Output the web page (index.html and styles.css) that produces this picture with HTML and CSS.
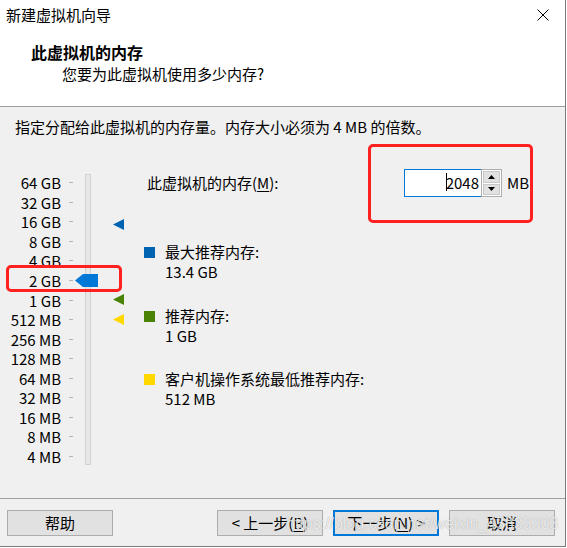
FILE: index.html
```html
<!DOCTYPE html>
<html lang="zh-CN">
<head>
<meta charset="utf-8">
<title>新建虚拟机向导</title>
<link rel="stylesheet" href="styles.css">
</head>
<body>
<div class="window">
  <div class="titlebar">
    <span class="title">新建虚拟机向导</span>
    <svg class="close" width="12" height="12" viewBox="0 0 12 12"><path d="M0.5 0.5 L11.5 11.5 M11.5 0.5 L0.5 11.5" stroke="#000" stroke-width="1" fill="none"/></svg>
  </div>
  <div class="header">
    <div class="heading">此虚拟机的内存</div>
    <div class="subheading">您要为此虚拟机使用多少内存?</div>
  </div>
  <div class="body">
    <p class="intro">指定分配给此虚拟机的内存量。内存大小必须为 4 MB 的倍数。</p>
    <div class="content">
      <div class="slider">
        <ul class="scale">
          <li><span class="lbl">64 GB</span><span class="tick"></span></li>
          <li><span class="lbl">32 GB</span><span class="tick"></span></li>
          <li><span class="lbl">16 GB</span><span class="tick"></span></li>
          <li><span class="lbl">8 GB</span><span class="tick"></span></li>
          <li><span class="lbl">4 GB</span><span class="tick"></span></li>
          <li><span class="lbl">2 GB</span><span class="tick"></span></li>
          <li><span class="lbl">1 GB</span><span class="tick"></span></li>
          <li><span class="lbl">512 MB</span><span class="tick"></span></li>
          <li><span class="lbl">256 MB</span><span class="tick"></span></li>
          <li><span class="lbl">128 MB</span><span class="tick"></span></li>
          <li><span class="lbl">64 MB</span><span class="tick"></span></li>
          <li><span class="lbl">32 MB</span><span class="tick"></span></li>
          <li><span class="lbl">16 MB</span><span class="tick"></span></li>
          <li><span class="lbl">8 MB</span><span class="tick"></span></li>
          <li><span class="lbl">4 MB</span><span class="tick"></span></li>
        </ul>
        <div class="track"></div>
        <svg class="marker marker-max" width="11" height="11" viewBox="0 0 11 11"><polygon points="0,5.5 11,0 11,11" fill="#0063b1"/></svg>
        <svg class="marker marker-rec" width="11" height="11" viewBox="0 0 11 11"><polygon points="0,5.5 11,0 11,11" fill="#498205"/></svg>
        <svg class="marker marker-min" width="11" height="11" viewBox="0 0 11 11"><polygon points="0,5.5 11,0 11,11" fill="#ffd800"/></svg>
        <svg class="thumb" width="23" height="13" viewBox="0 0 23 13"><polygon points="0,6.5 8,0 23,0 23,13 8,13" fill="#0078d7"/></svg>
      </div>
      <div class="details">
        <div class="mem-row">
          <span class="mem-label">此虚拟机的内存(<u>M</u>):</span>
          <div class="spin">
            <div class="spin-input"><span class="caret"></span>2048</div>
            <div class="spin-buttons">
              <div class="spin-btn"><svg width="7" height="4" viewBox="0 0 7 4"><polygon points="0,4 3.5,0 7,4" fill="#000"/></svg></div>
              <div class="spin-btn"><svg width="7" height="4" viewBox="0 0 7 4"><polygon points="0,0 7,0 3.5,4" fill="#000"/></svg></div>
            </div>
          </div>
          <span class="unit">MB</span>
        </div>
        <div class="legend">
          <div class="legend-item">
            <span class="swatch swatch-max"></span>
            <div class="legend-text"><div>最大推荐内存:</div><div>13.4 GB</div></div>
          </div>
          <div class="legend-item">
            <span class="swatch swatch-rec"></span>
            <div class="legend-text"><div>推荐内存:</div><div>1 GB</div></div>
          </div>
          <div class="legend-item">
            <span class="swatch swatch-min"></span>
            <div class="legend-text"><div>客户机操作系统最低推荐内存:</div><div>512 MB</div></div>
          </div>
        </div>
      </div>
    </div>
  </div>
  <div class="footer">
    <button class="btn">帮助</button>
    <div class="nav">
      <button class="btn">&lt; 上一步(<u>B</u>)</button>
      <button class="btn btn-default">下一步(<u>N</u>) &gt;</button>
      <button class="btn">取消</button>
    </div>
  </div>
  <div class="annot annot-slider"></div>
  <div class="annot annot-input"></div>
  <div class="watermark">https://blog.csdn.net/weixin_45833303</div>
</div>
</body>
</html>
```

FILE: styles.css
```css
* { box-sizing: border-box; }
html, body { margin: 0; padding: 0; background: #fff; }
body {
  font-family: "Noto Sans CJK SC", "Noto Sans", sans-serif;
  font-size: 15px;
  color: #000;
}
.window {
  position: relative;
  width: 566px;
  height: 547px;
  border-right: 1px solid #7a7a7a;
  border-bottom: 1px solid #7a7a7a;
  display: flex;
  flex-direction: column;
  background: #f0f0f0;
}
.titlebar {
  height: 31px;
  background: #fff;
  display: flex;
  align-items: center;
  justify-content: space-between;
  padding: 0 16px 2px 6px;
}
.title { line-height: 20px; }
.close { display: block; margin-top: 0; }
.header {
  height: 76px;
  background: #fff;
  border-bottom: 1px solid #a0a0a0;
  padding-top: 10px;
}
.heading {
  font-weight: bold;
  font-size: 16px;
  line-height: 22px;
  padding-left: 31px;
}
.subheading {
  line-height: 22px;
  padding-left: 62px;
}
.body {
  height: 391px;
  padding-top: 10px;
}
.intro {
  margin: 0;
  padding-left: 15px;
  line-height: 20px;
}
.content {
  display: flex;
  margin-top: 32px;
}
.slider {
  position: relative;
  width: 144px;
  height: 300px;
  display: flex;
  align-items: flex-start;
}
.scale {
  list-style: none;
  margin: 0;
  padding: 4px 0 0 0;
}
.scale li {
  height: 19.55px;
  display: flex;
  align-items: center;
}
.lbl {
  width: 61px;
  text-align: right;
  line-height: 19px;
}
.tick {
  width: 4px;
  height: 1px;
  background: #b4b4b4;
  margin-left: 8px;
}
.track {
  margin-left: 12px;
  margin-top: 5px;
  width: 6px;
  height: 291px;
  background: #e7e7e7;
  border: 1px solid #d3d3d3;
}
.marker, .thumb { position: absolute; display: block; }
.marker { left: 113px; }
.marker-max { top: 50px; }
.marker-rec { top: 125px; }
.marker-min { top: 145px; }
.thumb { left: 75px; top: 105px; }
.details {
  flex: 1;
  display: flex;
  flex-direction: column;
}
.mem-row {
  display: flex;
  align-items: center;
  height: 28px;
}
.mem-label {
  width: 260px;
  padding-left: 3px;
  line-height: 20px;
}
.mem-label u, .btn u { text-decoration-thickness: 1px; text-underline-offset: 2px; }
.spin {
  display: flex;
  height: 28px;
}
.spin-input {
  width: 77px;
  height: 28px;
  background: #fff;
  border: 1px solid #0078d7;
  border-right: none;
  display: flex;
  align-items: center;
  justify-content: flex-end;
  padding-right: 2px;
  line-height: 20px;
}
.caret {
  width: 1px;
  height: 18px;
  background: #000;
  margin-right: -1px;
  margin-top: -2px;
}
.spin-buttons {
  width: 21px;
  height: 28px;
  border: 1px solid #adadad;
  background: #fff;
  display: flex;
  flex-direction: column;
  padding: 1px;
  gap: 1px;
}
.spin-btn {
  flex: 1;
  background: #e1e1e1;
  border: 1px solid #c8c8c8;
  display: flex;
  align-items: center;
  justify-content: center;
}
.spin-btn svg { display: block; }
.unit {
  margin-left: 5px;
  line-height: 20px;
}
.legend {
  margin-top: 45px;
  display: flex;
  flex-direction: column;
  gap: 23.5px;
}
.legend-item {
  display: flex;
  align-items: flex-start;
}
.swatch {
  width: 11px;
  height: 11px;
  margin-top: 5px;
  margin-right: 10px;
  flex: none;
}
.swatch-max { background: #0063b1; }
.swatch-rec { background: #498205; }
.swatch-min { background: #ffd800; }
.legend-text { line-height: 20px; }
.footer {
  flex: 1;
  border-top: 1px solid #a0a0a0;
  display: flex;
  justify-content: space-between;
  padding: 11px 10px 0 7px;
}
.nav {
  display: flex;
  gap: 10px;
}
.btn {
  width: 106px;
  height: 26px;
  padding: 0;
  background: #e1e1e1;
  border: 1px solid #adadad;
  border-radius: 0;
  font: inherit;
  font-size: 15px;
  line-height: 20px;
  color: #000;
}
.btn-default { border: 2px solid #0078d7; }
.annot {
  position: absolute;
  border: 3px solid #ff2020;
  border-radius: 5px;
}
.annot-slider { left: 6px; top: 265px; width: 116px; height: 27px; }
.annot-input { left: 368px; top: 144px; width: 165px; height: 79px; }
.watermark {
  position: absolute;
  left: 286px;
  top: 514px;
  font-family: "Liberation Sans", Arial, sans-serif;
  font-size: 16px;
  line-height: 20px;
  color: rgba(255, 255, 255, 0.8);
  text-shadow: 0 0 1px rgba(0, 0, 0, 0.35);
  white-space: nowrap;
}
```
